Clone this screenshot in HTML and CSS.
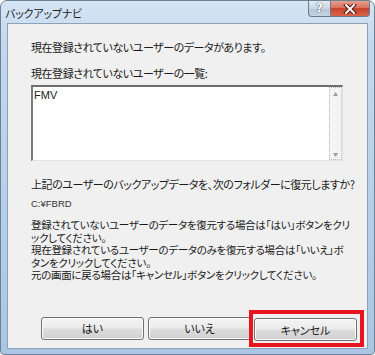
FILE: index.html
```html
<!DOCTYPE html>
<html lang="ja">
<head>
  <meta charset="UTF-8" />
  <title>バックアップナビ</title>
  <link rel="stylesheet" href="styles.css">
</head>
<body>

  <!-- Dialog window -->
  <div class="window">
    <div class="titlebar">
      <span class="title">バックアップナビ</span>
      <div class="caption-buttons">
        <div class="cap-btn help">?</div>
        <div class="cap-btn close">
          <svg width="14" height="10" viewBox="0 0 14 10">
            <path d="M3 1 L11 9 M11 1 L3 9" stroke="#5a1010" stroke-width="4" stroke-linecap="square"/>
            <path d="M3 1 L11 9 M11 1 L3 9" stroke="#ffffff" stroke-width="2" stroke-linecap="square"/>
          </svg>
        </div>
      </div>
    </div>

    <div class="client">
      <p class="msg first">現在登録されていないユーザーのデータがあります。</p>
      <p class="msg">現在登録されていないユーザーの一覧:</p>

      <div class="listbox">
        <div class="list-items">FMV</div>
        <div class="scrollbar">
          <span class="arrow">&#9650;</span>
          <span class="arrow">&#9660;</span>
        </div>
      </div>

      <p class="msg question">上記のユーザーのバックアップデータを、次のフォルダーに復元しますか?</p>
      <p class="path">C:¥FBRD</p>

      <div class="info">
        <p>登録されていないユーザーのデータを復元する場合は「はい」ボタンをクリ</p>
        <p>ックしてください。</p>
        <p>現在登録されているユーザーのデータのみを復元する場合は「いいえ」ボ</p>
        <p>タンをクリックしてください。</p>
        <p>元の画面に戻る場合は「キャンセル」ボタンをクリックしてください。</p>
      </div>

      <div class="buttons">
        <button class="btn">はい</button>
        <button class="btn">いいえ</button>
        <div class="highlight">
          <button class="btn">キャンセル</button>
        </div>
      </div>
    </div>
  </div>

</body>
</html>
```

FILE: styles.css
```css
body {
  margin: 0;
  background: #ffffff;
  font-family: "Noto Sans CJK JP", "Liberation Sans", sans-serif;
  font-feature-settings: "palt";
  color: #1a1a1a;
}

.window {
  width: 375px;
  height: 355px;
  box-sizing: border-box;
  padding: 0 6px 6px 6px;
  border: 1px solid #6e8296;
  border-radius: 7px 7px 4px 4px;
  background: linear-gradient(180deg, #d6e5f5 0%, #c3d8ee 12%, #b9d1ea 50%, #aac6e4 100%);
}

.titlebar {
  height: 22px;
  display: flex;
  justify-content: space-between;
  align-items: flex-start;
}

.title {
  font-size: 11px;
  letter-spacing: -0.2px;
  line-height: 24px;
  margin-left: -2px;
  color: #1e1e1e;
}

.caption-buttons {
  display: flex;
  margin-right: -2px;
}

.cap-btn {
  height: 15px;
  border: 1px solid #6a7b8f;
  border-top: none;
}

.help {
  width: 21px;
  border-radius: 0 0 0 4px;
  background: linear-gradient(180deg, #e4ecf4 0%, #c9d6e3 50%, #b3c3d5 51%, #c5d4e4 100%);
  color: #ffffff;
  font-family: "DejaVu Sans", sans-serif;
  font-weight: bold;
  font-size: 12px;
  line-height: 15px;
  text-align: center;
  text-shadow: 0 0 1px #3b4a5c, 0 0 1px #3b4a5c;
}

.close {
  width: 38px;
  border-left: none;
  border-radius: 0 0 4px 0;
  background: linear-gradient(180deg, #e8a08e 0%, #d5725c 45%, #c7432a 50%, #d8644a 100%);
  display: flex;
  justify-content: center;
  align-items: center;
}

.client {
  height: 326px;
  box-sizing: border-box;
  border: 1px solid #8ea0b6;
  background: #f0f0f0;
  padding: 16px 0 1px 23px;
  display: flex;
  flex-direction: column;
}

.client p {
  white-space: nowrap;
  flex-shrink: 0;
}

.msg {
  margin: 0;
  font-size: 11px;
  letter-spacing: -0.45px;
  line-height: 14px;
}

.first {
  margin-bottom: 12px;
}

.listbox {
  flex-shrink: 0;
  margin-top: 5px;
  width: 312px;
  height: 76px;
  box-sizing: border-box;
  border-top: 2px solid #6d6d6d;
  border-left: 2px solid #7a7a7a;
  border-right: 1px solid #e3e3e3;
  border-bottom: 1px solid #e3e3e3;
  background: #ffffff;
  display: flex;
}

.list-items {
  flex: 1;
  font-family: "Liberation Sans", sans-serif;
  font-size: 11px;
  line-height: 14px;
  padding: 1px 0 0 1px;
  color: #222;
}

.scrollbar {
  width: 11px;
  border: 1px dotted #b8b8b8;
  background: #f4f4f4;
  display: flex;
  flex-direction: column;
  justify-content: space-between;
  align-items: center;
  padding: 3px 0 2px;
}

.arrow {
  font-size: 5px;
  line-height: 6px;
  color: #9a9a9a;
}

.question {
  margin-top: 16px;
}

.path {
  margin: 7px 0 0;
  font-family: "Liberation Sans", sans-serif;
  font-size: 9.5px;
  line-height: 12px;
  color: #333;
}

.info {
  margin-top: 9px;
  flex-shrink: 0;
}

.info p {
  margin: 0;
  font-size: 10.5px;
  letter-spacing: -0.3px;
  line-height: 12.6px;
}

.buttons {
  display: flex;
  align-items: center;
  margin-top: auto;
  margin-left: 10px;
  gap: 4px;
}

.btn {
  width: 103px;
  height: 23px;
  border: 1px solid #707070;
  border-radius: 3px;
  background: linear-gradient(180deg, #f4f4f4 0%, #ebebeb 48%, #dddddd 52%, #cfcfcf 100%);
  box-shadow: inset 0 0 0 1px #fcfcfc;
  font-family: "Noto Sans CJK JP", sans-serif;
  font-feature-settings: "palt";
  font-size: 11px;
  color: #1a1a1a;
  padding: 0;
}

.highlight {
  border: 4px solid #e8141e;
  padding: 2px 3px 2px 1px;
  margin-left: -6px;
}
```
